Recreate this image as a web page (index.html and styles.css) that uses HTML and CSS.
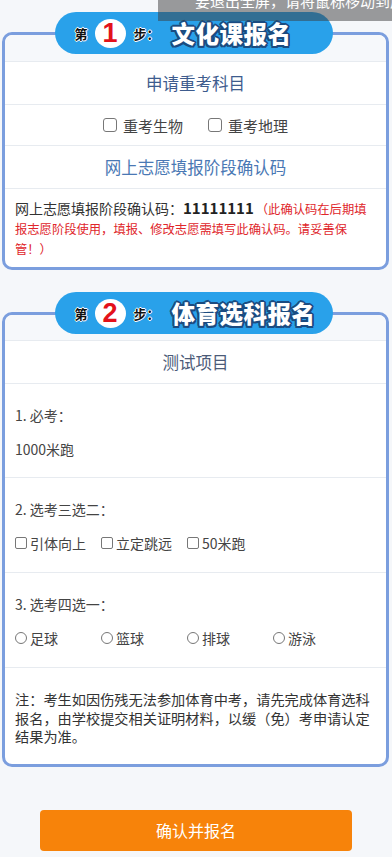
FILE: index.html
```html
<!DOCTYPE html>
<html lang="zh-CN">
<head>
    <meta charset="UTF-8">
    <meta name="viewport" content="width=device-width, initial-scale=1.0">
    <title>中考报名</title>
    <link rel="stylesheet" href="styles.css">
</head>
<body>
    <!-- aviso de pantalla completa del navegador -->
    <div class="fs-tip">要退出全屏，请将鼠标移动到屏幕顶部</div>

    <!-- Paso 1 -->
    <div class="card card-one">
        <div class="step">
            <span class="step-small">第</span>
            <span class="step-num">1</span>
            <span class="step-small">步：</span>
            <span class="step-name">文化课报名</span>
        </div>
        <div class="card-top"></div>
        <div class="row row-title">申请重考科目</div>
        <div class="row row-check">
            <label class="chk-big"><span class="box"></span>重考生物</label>
            <label class="chk-big"><span class="box"></span>重考地理</label>
        </div>
        <div class="row row-title blue">网上志愿填报阶段确认码</div>
        <div class="row row-code">网上志愿填报阶段确认码：<b>11111111</b><span class="warn">（此确认码在后期填报志愿阶段使用，填报、修改志愿需填写此确认码。请妥善保管！）</span></div>
    </div>

    <!-- Paso 2 -->
    <div class="card card-two">
        <div class="step">
            <span class="step-small">第</span>
            <span class="step-num">2</span>
            <span class="step-small">步：</span>
            <span class="step-name">体育选科报名</span>
        </div>
        <div class="card-top"></div>
        <div class="row row-title gray">测试项目</div>
        <div class="row row-item">
            <div class="item-label">1. 必考：</div>
            <div class="item-line">1000米跑</div>
        </div>
        <div class="row row-item">
            <div class="item-label">2. 选考三选二：</div>
            <div class="item-line">
                <label class="opt"><span class="box"></span>引体向上</label>
                <label class="opt"><span class="box"></span>立定跳远</label>
                <label class="opt"><span class="box"></span>50米跑</label>
            </div>
        </div>
        <div class="row row-item">
            <div class="item-label">3. 选考四选一：</div>
            <div class="item-line">
                <label class="opt"><span class="box round"></span>足球</label>
                <label class="opt"><span class="box round"></span>篮球</label>
                <label class="opt"><span class="box round"></span>排球</label>
                <label class="opt"><span class="box round"></span>游泳</label>
            </div>
        </div>
        <div class="row row-note">注：考生如因伤残无法参加体育中考，请先完成体育选科报名，由学校提交相关证明材料，以缓（免）考申请认定结果为准。</div>
    </div>

    <button class="btn-ok">确认并报名</button>
</body>
</html>
```

FILE: styles.css
```css
body {
    margin: 0;
    padding: 0 0 20px;
    background-color: #f5f7fa;
    color: #333;
    font-family: "Noto Sans CJK SC", "Noto Sans", sans-serif;
    font-size: 14px;
}

.fs-tip {
    position: absolute;
    top: -14px;
    left: 158px;
    right: 0;
    height: 35px;
    padding-left: 37px;
    background: rgba(60, 60, 60, 0.5);
    color: #fff;
    font-size: 15px;
    line-height: 29px;
    white-space: nowrap;
    overflow: hidden;
    z-index: 10;
}

.card {
    position: relative;
    margin: 0 3px 0 2px;
    border: 3px solid #7b9ede;
    border-radius: 10px;
    background: #fff;
}

.card-one {
    margin-top: 32px;
}

.card-two {
    margin-top: 42px;
}

.card-top {
    height: 26px;
    background: #f6f8fb;
    border-radius: 8px 8px 0 0;
}

.card-two .card-top {
    height: 25px;
}

.step {
    position: absolute;
    top: -23px;
    left: 50%;
    margin-left: -141px;
    width: 278px;
    height: 42px;
    padding-left: 20px;
    box-sizing: border-box;
    display: flex;
    align-items: center;
    background: #29a1ea;
    border-radius: 21px;
}

.step-small {
    font-size: 13px;
    font-weight: bold;
    color: #111;
    text-shadow: 1px 0 #fff, -1px 0 #fff, 0 1px #fff, 0 -1px #fff;
}

.step-num {
    width: 31px;
    height: 29px;
    margin: 0 8px 0 7px;
    border-radius: 50%;
    background: #fff;
    color: #e3121b;
    font-family: "Liberation Sans", Arial, sans-serif;
    font-size: 27px;
    font-weight: bold;
    line-height: 29px;
    text-align: center;
}

.step-name {
    margin-left: 12px;
    font-size: 23.5px;
    font-weight: 900;
    letter-spacing: 0.5px;
    color: #fff;
    text-shadow: 2px 0 #1b4b80, -2px 0 #1b4b80, 0 2px #1b4b80, 0 -2px #1b4b80,
        1.5px 1.5px #1b4b80, -1.5px -1.5px #1b4b80, 1.5px -1.5px #1b4b80, -1.5px 1.5px #1b4b80;
}

.row {
    border-top: 1px solid #e7ebf0;
}

.row-title {
    height: 42px;
    line-height: 42px;
    text-align: center;
    font-size: 16.5px;
    color: #3e5c8e;
}

.row-title.blue {
    color: #4a78b4;
}

.row-title.gray {
    color: #4c5b78;
}

.row-check {
    height: 40px;
    display: flex;
    align-items: center;
    justify-content: center;
    gap: 25px;
    font-size: 15px;
    color: #444;
}

.chk-big {
    display: flex;
    align-items: center;
}

.chk-big .box {
    width: 14px;
    height: 14px;
    margin-right: 6px;
    border-radius: 3px;
}

.box {
    display: inline-block;
    box-sizing: border-box;
    width: 12px;
    height: 12px;
    border: 1px solid #777;
    border-radius: 2px;
    background: #fff;
}

.box.round {
    border-radius: 50%;
}

.row-code {
    padding: 9px 16px 9px 10px;
    line-height: 20px;
    font-size: 14px;
}

.row-code b {
    font-size: 15px;
    line-height: 1;
    color: #222;
    margin-right: 2px;
}

.warn {
    font-size: 12.3px;
    line-height: 1;
    color: #e0262b;
}

.row-item {
    padding: 20px 10px 18px;
}

.card-two .row-item:nth-child(4) {
    padding-bottom: 17px;
}

.item-label,
.item-line {
    height: 22px;
    line-height: 22px;
    color: #444;
}

.item-line {
    margin-top: 12px;
    display: flex;
    align-items: center;
}

.opt {
    width: 86px;
    display: flex;
    align-items: center;
}

.opt .box {
    margin-right: 3px;
}

.row-note {
    padding: 22px 11px 18px 10px;
    font-size: 14.2px;
    line-height: 18.5px;
}

.btn-ok {
    display: block;
    width: 312px;
    height: 41px;
    margin: 43px 0 0 40px;
    border: none;
    border-radius: 4px;
    background: #f7830a;
    color: #fff;
    font-family: "Noto Sans CJK SC", sans-serif;
    font-size: 16px;
}
```
